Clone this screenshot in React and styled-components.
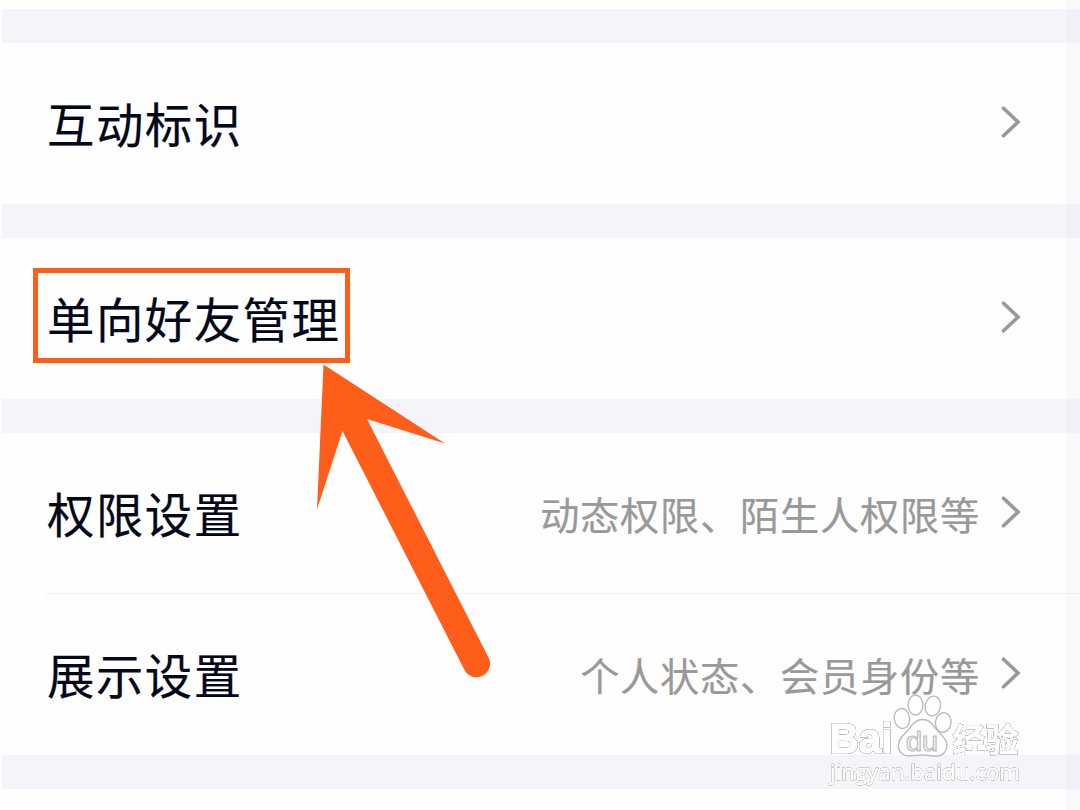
import styled, { createGlobalStyle } from 'styled-components';

const GROUPS = [
  [{ label: '互动标识' }],
  [{ label: '单向好友管理', marked: true }],
  [
    { label: '权限设置', desc: '动态权限、陌生人权限等' },
    { label: '展示设置', desc: '个人状态、会员身份等' },
  ],
];

const Chevron = () => (
  <ChevronIcon viewBox="0 0 22 34">
    <path d="M3.5 3.2L18 17L3.5 30.8" />
  </ChevronIcon>
);

const SettingRow = ({ label, desc, marked }) => (
  <Row>
    <Label>
      {label}
      {marked && <Highlight />}
    </Label>
    {desc && <Desc>{desc}</Desc>}
    <Chevron />
  </Row>
);

const Pointer = () => (
  <PointerIcon viewBox="0 0 140 320">
    <path d="M13.5 4.5L135 83.5L57 59L178.500 297.500A13.5 13.5 0 0 1 154.500 310L32.5 71L7 149.500Z" />
  </PointerIcon>
);

const Logo = () => (
  <Watermark viewBox="0 0 210 100">
    <text className="name" x="9.500" y="63" fontSize="42" textLength="63" lengthAdjust="spacingAndGlyphs">
      Bai
    </text>
    <g className="paw">
      <ellipse cx="82" cy="28.5" rx="7.7" ry="10" transform="rotate(-8 82 28.5)" />
      <ellipse cx="95.5" cy="15" rx="7.4" ry="10" />
      <ellipse cx="112.8" cy="16" rx="7.6" ry="10" transform="rotate(12 112.8 16)" />
      <ellipse cx="123.2" cy="32.5" rx="7.8" ry="9.8" transform="rotate(8 123.2 32.5)" />
      <path d="M102.500 29.500C96 29.500 92.500 34 89 39C85 44 78.300 48 78.300 56C78.300 62 83 66 89 66C94 66 97 65 102.500 65C108 65 111 66 117 66C123 66 127 61 127 55C127 48 120 44 116 39C112.500 33 109 29.500 102.500 29.500Z" />
    </g>
    <text className="du" x="86" y="60.500" fontSize="27" textLength="32" lengthAdjust="spacingAndGlyphs">
      du
    </text>
    <text className="name cjk" x="132.500" y="62" fontSize="33" textLength="66">
      经验
    </text>
    <text className="url" x="10" y="90" fontSize="22" textLength="190" lengthAdjust="spacingAndGlyphs">
      jingyan.baidu.com
    </text>
  </Watermark>
);

const App = () => {
  return (
    <Screen>
      <GlobalStyle />
      <TopEdge />
      <Divider />
      {GROUPS.map((rows) => (
        <div key={rows[0].label}>
          <Group>
            {rows.map((row) => (
              <SettingRow key={row.label} {...row} />
            ))}
          </Group>
          <Divider />
        </div>
      ))}
      <EdgeShade />
      <Pointer />
      <Logo />
    </Screen>
  );
};

const GlobalStyle = createGlobalStyle`
  body {
    margin: 0;
    background-color: #fefefe;
    font-family: 'Noto Sans CJK SC', sans-serif;
  }
`;

const Screen = styled.main`
  position: relative;
  box-sizing: border-box;
  width: 1080px;
  height: 810px;
  overflow: hidden;
  background-color: #fefefe;
`;

const TopEdge = styled.div`
  height: 8.6px;
`;

const Divider = styled.div`
  height: 34px;
  margin-left: 2px;
  background-color: #f4f5fb;
`;

const Group = styled.section`
  display: flex;
  flex-direction: column;
`;

const Row = styled.div`
  display: flex;
  align-items: center;
  box-sizing: border-box;
  height: 161px;
  margin-left: 46px;
  padding-right: 58px;
  padding-bottom: 2px;

  &:not(:last-child) {
    padding-bottom: 1px;
    border-bottom: 1px solid #edf0f4;
  }
`;

const Label = styled.span`
  position: relative;
  flex: 1;
  padding-top: 2px;
  padding-left: 1px;
  color: #03081a;
  font-size: 47.4px;
  letter-spacing: 1.5px;
  line-height: 72px;
  -webkit-text-stroke: 0.2px #03081a;
`;

const Highlight = styled.span`
  position: absolute;
  top: -12px;
  left: -13px;
  box-sizing: border-box;
  width: 317px;
  height: 95px;
  border: 5px solid #ff5e1a;
`;

const Desc = styled.span`
  margin-right: 20px;
  padding-top: 1px;
  color: #999;
  font-size: 39.2px;
  letter-spacing: 0.8px;
  line-height: 60px;
  -webkit-text-stroke: 0.2px #999;
`;

const ChevronIcon = styled.svg`
  width: 22px;
  height: 34px;
  fill: none;
  stroke: #999;
  stroke-width: 3.6;
  stroke-linecap: round;
`;

const EdgeShade = styled.div`
  position: absolute;
  top: 0;
  right: 0;
  width: 14px;
  height: 100%;
  background-color: rgba(60, 60, 110, 0.022);
`;

const PointerIcon = styled.svg`
  position: absolute;
  top: 360px;
  left: 310px;
  width: 140px;
  height: 320px;
  overflow: visible;
  fill: #ff5e1a;
`;

const Watermark = styled.svg`
  position: absolute;
  top: 690px;
  left: 820px;
  width: 210px;
  height: 100px;
  overflow: visible;
  fill: #fff;
  font-family: 'Liberation Sans', sans-serif;

  .name {
    font-weight: 700;
    stroke: #fff;
    stroke-width: 1.6;
    filter: drop-shadow(0 0 0.7px #666) drop-shadow(0 0 0.5px #888);
  }

  .cjk {
    font-family: 'Noto Sans CJK SC', sans-serif;
    stroke-width: 0.8;
  }

  .paw {
    stroke: #bcbcbc;
    stroke-width: 1.4;
  }

  .du {
    font-weight: 400;
    stroke: #b8b8b8;
    stroke-width: 1.1;
  }

  .url {
    font-family: 'Open Sans', sans-serif;
    font-weight: 400;
    stroke: #fff;
    stroke-width: 0.8;
    filter: drop-shadow(0 0 0.7px #777) drop-shadow(0 0 0.5px #aaa);
  }
`;

export default App;
